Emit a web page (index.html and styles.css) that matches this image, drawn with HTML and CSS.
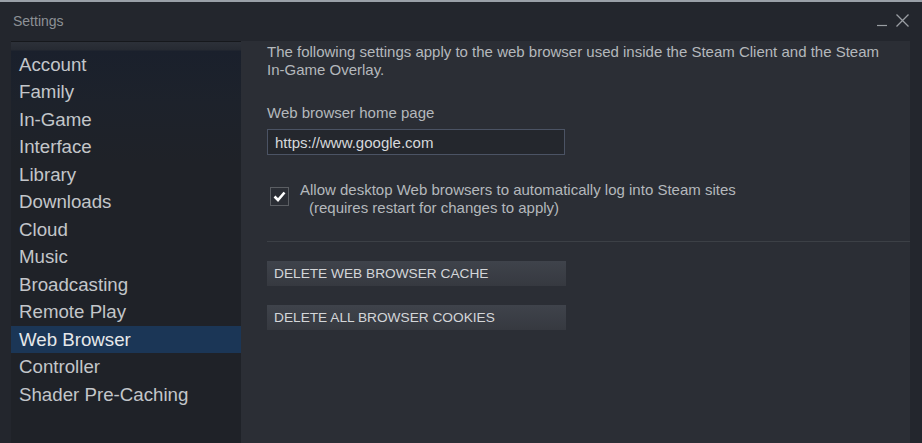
FILE: index.html
```html
<!DOCTYPE html>
<html lang="en">
<head>
    <meta charset="UTF-8">
    <meta name="viewport" content="width=device-width, initial-scale=1.0">
    <title>Settings</title>
    <link rel="stylesheet" href="styles.css">
</head>
<body>
    <div class="window">
        <div class="titlebar">
            <span class="title">Settings</span>
            <div class="controls">
                <svg class="ctl" width="12" height="14" viewBox="0 0 12 14"><path d="M1 12.5h10" stroke="#9a9ea3" stroke-width="1.2"/></svg>
                <svg class="ctl" width="15" height="15" viewBox="0 0 15 15"><path d="M1.5 1.5l12 12M13.5 1.5l-12 12" stroke="#9a9ea3" stroke-width="1.3"/></svg>
            </div>
        </div>

        <div class="main">
            <ul class="sidebar">
                <li>Account</li>
                <li>Family</li>
                <li>In-Game</li>
                <li>Interface</li>
                <li>Library</li>
                <li>Downloads</li>
                <li>Cloud</li>
                <li>Music</li>
                <li>Broadcasting</li>
                <li>Remote Play</li>
                <li class="active">Web Browser</li>
                <li>Controller</li>
                <li>Shader Pre-Caching</li>
            </ul>

            <div class="content">
                <p class="intro">The following settings apply to the web browser used inside the Steam Client and the Steam In-Game Overlay.</p>

                <label class="field-label" for="homePage">Web browser home page</label>
                <input class="text-input" type="text" id="homePage" value="https://www.google.com">

                <div class="check-row">
                    <span class="checkbox">
                        <svg width="13" height="11" viewBox="0 0 13 11"><path d="M1.5 5.5l3.5 3.5 6.5-7.5" fill="none" stroke="#fff" stroke-width="2.6"/></svg>
                    </span>
                    <div class="check-text">
                        Allow desktop Web browsers to automatically log into Steam sites<br>
                        <span class="note">(requires restart for changes to apply)</span>
                    </div>
                </div>

                <hr class="divider">

                <button class="btn">Delete web browser cache</button>
                <button class="btn">Delete all browser cookies</button>
            </div>
        </div>
    </div>
</body>
</html>
```

FILE: styles.css
```css
html, body {
    margin: 0;
    padding: 0;
    height: 100%;
}
body {
    font-family: Arial, "Liberation Sans", sans-serif;
    background-color: #9aa0a8;
    overflow: hidden;
}
.window {
    margin-top: 2px;
    height: 441px;
    background-color: #23262d;
    display: flex;
    flex-direction: column;
}
.titlebar {
    height: 39px;
    display: flex;
    align-items: flex-start;
    justify-content: space-between;
}
.title {
    margin: 11px 0 0 13px;
    font-size: 14px;
    color: #8d9196;
}
.controls {
    display: flex;
    gap: 7px;
    margin: 11px 12px 0 0;
}
.main {
    flex: 1;
    display: flex;
    min-height: 0;
}
.sidebar {
    list-style: none;
    margin: 0 0 0 11px;
    padding: 8.5px 0 0;
    width: 230px;
    border-top: 1px solid #16181c;
    background: linear-gradient(#2c3038 0, #2c3038 1px, #262a32 8px, #1a202c 9px, #1d222b 60px, #1f2228 120px);
}
.sidebar li {
    height: 27.5px;
    line-height: 27.5px;
    padding-left: 8px;
    font-size: 18.7px;
    color: #c3c6ca;
}
.sidebar li.active {
    background-color: #1b3656;
    color: #e6e8ea;
}
.content {
    flex: 1;
    margin-right: 12px;
    padding: 2px 0 0 26px;
    background-color: #2b2e35;
    display: flex;
    flex-direction: column;
    align-items: flex-start;
}
.intro {
    margin: 0;
    max-width: 620px;
    font-size: 15px;
    line-height: 18px;
    color: #b4b8bc;
}
.field-label {
    margin-top: 25px;
    font-size: 15px;
    line-height: 18px;
    color: #b4b8bc;
}
.text-input {
    margin-top: 7px;
    width: 298px;
    height: 26px;
    box-sizing: border-box;
    padding: 0 7px;
    border: 1px solid #4b5364;
    background-color: #24272d;
    color: #d6d9dc;
    font-family: inherit;
    font-size: 15px;
    outline: none;
}
.check-row {
    margin-top: 26px;
    display: flex;
    gap: 11px;
}
.checkbox {
    margin: 6px 0 0 3px;
    width: 17px;
    height: 17px;
    border: 1px solid #5b5e63;
    display: flex;
    align-items: center;
    justify-content: center;
}
.check-text {
    font-size: 15px;
    line-height: 18px;
    color: #b4b8bc;
}
.note {
    padding-left: 9px;
}
.divider {
    align-self: stretch;
    margin: 24px 0 0 0;
    border: none;
    border-top: 1px solid #3c4046;
    height: 0;
}
.btn {
    margin-top: 19px;
    width: 299px;
    height: 25px;
    padding: 0 7px;
    text-align: left;
    border: none;
    background: linear-gradient(#3f434b, #363940);
    color: #d4d6d9;
    font-family: inherit;
    font-size: 13.7px;
    text-transform: uppercase;
}
```
